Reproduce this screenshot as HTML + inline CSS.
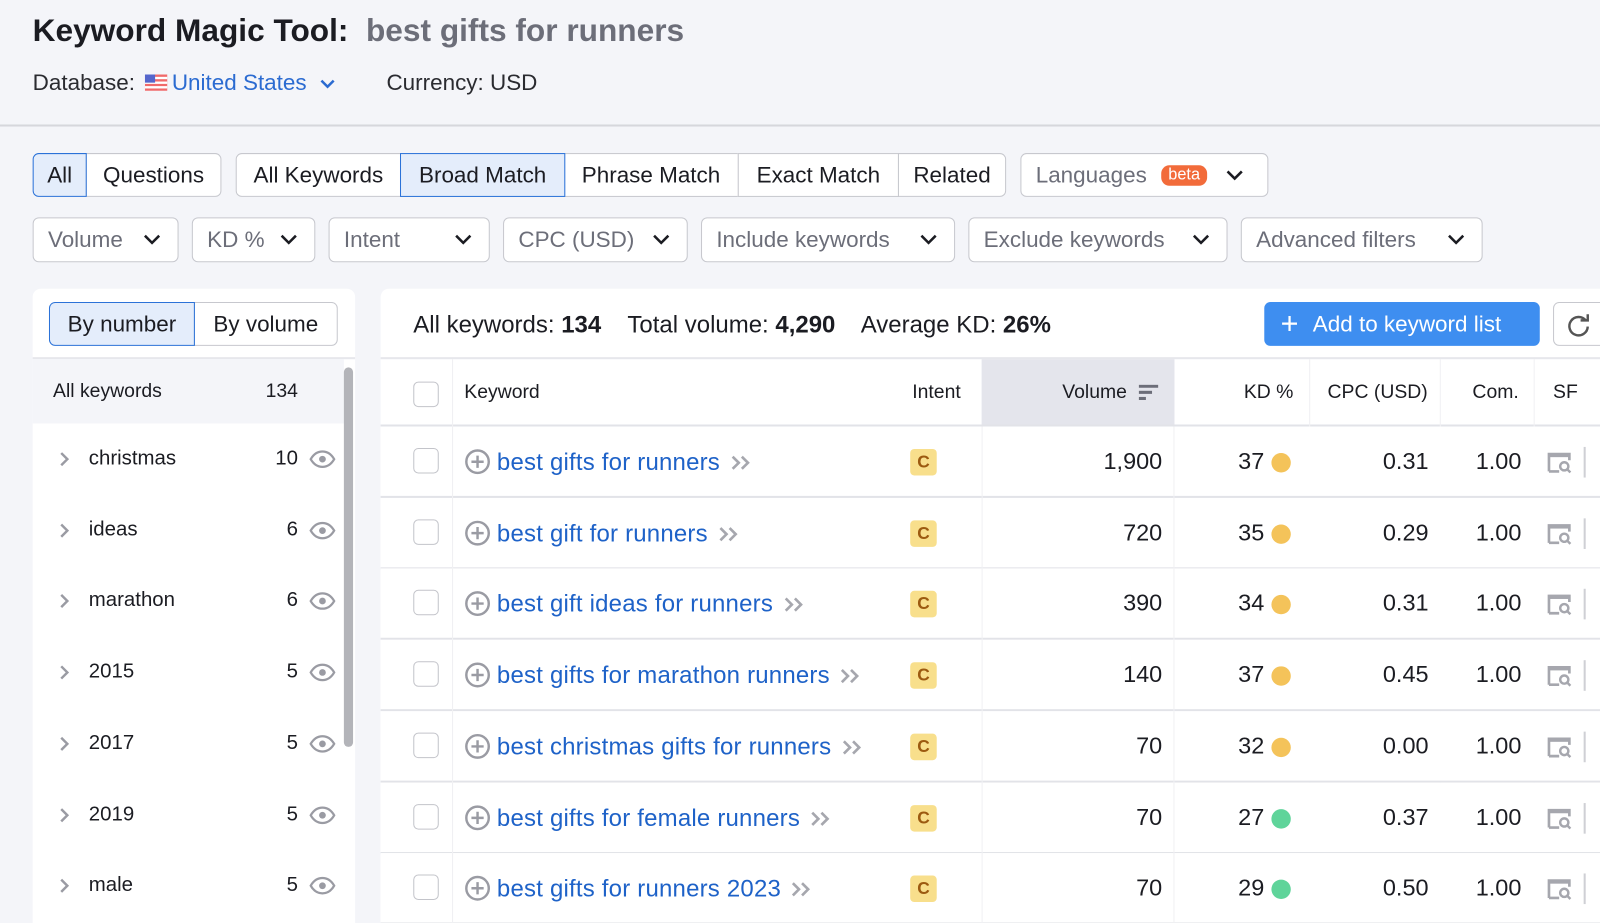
<!DOCTYPE html>
<html style="width:1600px;height:923px;overflow:hidden"><head><meta charset="utf-8">
<style>
*{box-sizing:border-box;margin:0;padding:0}
body{width:1600px;height:923px;overflow:hidden;background:#f4f5f9;font-family:"Liberation Sans",Arial,sans-serif;color:#1b1c22;position:relative}
#w{position:absolute;left:0;top:0;width:1568px;height:905px;overflow:hidden;transform:scale(1.0204);transform-origin:0 0}
.a{position:absolute}
.btn{position:absolute;height:43px;border:1px solid #c7c8ce;background:#fff;font-size:22px;display:flex;align-items:center;justify-content:center;color:#1b1c22}
.sel{background:#e4edfb;border:1.5px solid #2b72d8;z-index:2}
.flt{position:absolute;top:213px;height:44px;border:1px solid #c7c8ce;border-radius:6px;background:#fff;font-size:22px;color:#6c6e79;display:flex;align-items:center;padding-left:14px}
.flt svg{position:absolute;right:16px;top:15px}
.row{position:absolute;left:373px;width:1240px;height:70px;background:#fff;border-bottom:2px solid #e2e3e8}
.cell{position:absolute;font-size:22px;top:50%;transform:translateY(-50%);white-space:nowrap}
</style></head><body><div id="w">
<div class="a" style="left:32px;top:12px;font-size:31px;font-weight:bold;white-space:nowrap">Keyword Magic Tool:&nbsp; <span style="color:#6c6e79">best gifts for runners</span></div>
<div class="a" style="left:32px;top:68px;font-size:22px;white-space:nowrap;color:#2a2b30">Database:
<svg width="22" height="16" style="vertical-align:-1px;margin:0 4px"><rect width="22" height="16" fill="#f06a6a"/><rect y="2.3" width="22" height="2.3" fill="#fff"/><rect y="6.9" width="22" height="2.3" fill="#fff"/><rect y="11.4" width="22" height="2.3" fill="#fff"/><rect width="10" height="8" fill="#5566cc"/></svg><span style="color:#2b6bd1">United States</span>
<svg width="16" height="12" style="margin-left:6px"><path d="M2 3l6 6 6-6" stroke="#2b6bd1" stroke-width="2.5" fill="none"/></svg>
<span style="margin-left:44px">Currency: USD</span></div>
<div class="a" style="left:0;top:122px;width:1600px;height:2px;background:#d6d7dc"></div>

<div class="btn sel" style="left:32px;top:150px;width:53px;border-radius:6px 0 0 6px">All</div>
<div class="btn" style="left:84px;top:150px;width:133px;border-radius:0 6px 6px 0">Questions</div>
<div class="btn" style="left:231px;top:150px;width:162px;border-radius:6px 0 0 6px">All Keywords</div>
<div class="btn sel" style="left:392px;top:150px;width:162px">Broad Match</div>
<div class="btn" style="left:553px;top:150px;width:171px;border-left:none">Phrase Match</div>
<div class="btn" style="left:723px;top:150px;width:158px">Exact Match</div>
<div class="btn" style="left:880px;top:150px;width:106px;border-radius:0 6px 6px 0">Related</div>
<div class="btn" style="left:1000px;top:150px;width:243px;border-radius:6px;justify-content:flex-start;padding-left:14px;color:#6c6e79">Languages<span style="background:#f26b3a;color:#fff;font-size:16px;border-radius:8px;padding:1px 7px;margin-left:14px">beta</span><svg width="18" height="12" style="margin-left:18px"><path d="M2 2l7 7 7-7" stroke="#1b1c22" stroke-width="2.5" fill="none"/></svg></div>

<div class="flt" style="left:32px;width:143px">Volume<svg width="18" height="12"><path d="M2 2l7 7 7-7" stroke="#1b1c22" stroke-width="2.5" fill="none"/></svg></div>
<div class="flt" style="left:188px;width:121px">KD %<svg width="18" height="12"><path d="M2 2l7 7 7-7" stroke="#1b1c22" stroke-width="2.5" fill="none"/></svg></div>
<div class="flt" style="left:322px;width:158px">Intent<svg width="18" height="12"><path d="M2 2l7 7 7-7" stroke="#1b1c22" stroke-width="2.5" fill="none"/></svg></div>
<div class="flt" style="left:493px;width:181px">CPC (USD)<svg width="18" height="12"><path d="M2 2l7 7 7-7" stroke="#1b1c22" stroke-width="2.5" fill="none"/></svg></div>
<div class="flt" style="left:687px;width:249px">Include keywords<svg width="18" height="12"><path d="M2 2l7 7 7-7" stroke="#1b1c22" stroke-width="2.5" fill="none"/></svg></div>
<div class="flt" style="left:949px;width:254px">Exclude keywords<svg width="18" height="12"><path d="M2 2l7 7 7-7" stroke="#1b1c22" stroke-width="2.5" fill="none"/></svg></div>
<div class="flt" style="left:1216px;width:237px">Advanced filters<svg width="18" height="12"><path d="M2 2l7 7 7-7" stroke="#1b1c22" stroke-width="2.5" fill="none"/></svg></div>

<div class="a" style="left:32px;top:283px;width:316px;height:622px;background:#fff;border-radius:8px 8px 0 0"></div>
<div class="btn sel" style="left:48px;top:296px;width:143px;border-radius:6px 0 0 6px">By number</div>
<div class="btn" style="left:190px;top:296px;width:141px;border-radius:0 6px 6px 0">By volume</div>
<div class="a" style="left:32px;top:350px;width:316px;height:2px;background:#e6e7ec"></div>
<div class="a" style="left:32px;top:352px;width:305px;height:63px;background:#f4f5f9"></div>
<div class="a" style="left:52px;top:373px;font-size:19px">All keywords</div>
<div class="a" style="left:250px;top:373px;width:42px;text-align:right;font-size:19px">134</div>
<div class="a" style="left:337px;top:360px;width:9px;height:372px;border-radius:5px;background:#b3b4b9"></div>

<div class="a" style="left:373px;top:283px;width:1240px;height:622px;background:#fff;border-radius:8px 0 0 0"></div>
<div class="a" style="left:405px;top:305px;font-size:23.5px;white-space:nowrap">All keywords: <b>134</b>&nbsp;&nbsp;&nbsp; Total volume: <b>4,290</b>&nbsp;&nbsp;&nbsp; Average KD: <b>26%</b></div>
<div class="a" style="left:1239px;top:296px;width:270px;height:43px;background:#3e8ef0;border-radius:6px;color:#fff;font-size:22px;display:flex;align-items:center;padding-left:16px"><span style="font-size:30px;font-weight:300;margin-right:14px;line-height:1">+</span>Add to keyword list</div>
<div class="a" style="left:1522px;top:296px;width:60px;height:43px;border:1px solid #c7c8ce;border-radius:6px;background:#fff"><svg class="a" style="left:12px;top:10px" width="24" height="24"><path d="M19 7A9 9 0 1 0 21 13" stroke="#555" stroke-width="2.4" fill="none"/><path d="M14 6h7V0" stroke="#555" stroke-width="2.4" fill="none" transform="translate(0,1)"/></svg></div>
<div class="a" style="left:373px;top:350px;width:1240px;height:2px;background:#e6e7ec"></div>
<div class="a" style="left:962px;top:352px;width:189px;height:66px;background:#e4e5ec"></div>
<div class="a" style="left:373px;top:416px;width:1240px;height:2px;background:#e2e3e8"></div>
<div class="a" style="left:405px;top:374px;width:25px;height:25px;border:1.5px solid #c3c4ca;border-radius:5px;background:#fff"></div>
<div class="a" style="left:455px;top:374px;font-size:19px">Keyword</div>
<div class="a" style="left:894px;top:374px;font-size:19px">Intent</div>
<div class="a" style="left:1041px;top:374px;font-size:19px">Volume</div>
<svg class="a" style="left:1116px;top:377px" width="20" height="16"><rect width="19" height="3" fill="#6c6e79"/><rect y="6" width="13" height="3" fill="#6c6e79"/><rect y="12" width="7" height="3" fill="#6c6e79"/></svg>
<div class="a" style="left:1219px;top:374px;font-size:19px">KD %</div>
<div class="a" style="left:1301px;top:374px;font-size:19px">CPC (USD)</div>
<div class="a" style="left:1443px;top:374px;font-size:19px">Com.</div>
<div class="a" style="left:1522px;top:374px;font-size:19px">SF</div>
<div class="a" style="left:443px;top:352px;width:1px;height:553px;background:#f0f0f3"></div>
<div class="a" style="left:1283px;top:352px;width:1px;height:553px;background:#f0f0f3"></div>
<div class="a" style="left:1411px;top:352px;width:1px;height:553px;background:#f0f0f3"></div>
<div class="a" style="left:1503px;top:352px;width:1px;height:553px;background:#f0f0f3"></div>

<div id="rows"></div>
</div>
<script>
var L=[["christmas",10],["ideas",6],["marathon",6],["2015",5],["2017",5],["2019",5],["male",5]];
var R=[["best gifts for runners","1,900",37,"y","0.31"],["best gift for runners","720",35,"y","0.29"],["best gift ideas for runners","390",34,"y","0.31"],["best gifts for marathon runners","140",37,"y","0.45"],["best christmas gifts for runners","70",32,"y","0.00"],["best gifts for female runners","70",27,"g","0.37"],["best gifts for runners 2023","70",29,"g","0.50"]];
var h="";
for(var i=0;i<7;i++){var c=Math.round(450+i*69.7);
h+='<svg class="a" style="left:57px;top:'+(c-8)+'px" width="12" height="16"><path d="M3 2l6 6-6 6" stroke="#9a9ba3" stroke-width="2.4" fill="none"/></svg>';
h+='<div class="a" style="left:87px;top:'+(c-12)+'px;font-size:20px">'+L[i][0]+'</div>';
h+='<div class="a" style="left:250px;top:'+(c-12)+'px;width:42px;text-align:right;font-size:20px">'+L[i][1]+'</div>';
h+='<svg class="a" style="left:303px;top:'+(c-9)+'px" width="26" height="18"><path d="M1.5 9C5 3 9 1.5 13 1.5S21 3 24.5 9C21 15 17 16.5 13 16.5S5 15 1.5 9z" stroke="#9a9ba3" stroke-width="2.2" fill="none"/><circle cx="13" cy="9" r="3.3" fill="#9a9ba3"/></svg>';}
for(var i=0;i<7;i++){var t=Math.round(418+i*69.7),r=R[i];
h+='<div class="row" style="top:'+t+'px">';
h+='<div class="a" style="left:70px;top:0;width:1px;height:70px;background:#f0f0f3"></div><div class="a" style="left:589px;top:0;width:1px;height:70px;background:#f0f0f3"></div><div class="a" style="left:777px;top:0;width:1px;height:70px;background:#f0f0f3"></div>';
h+='<div class="a" style="left:32px;top:21px;width:25px;height:25px;border:1.5px solid #c3c4ca;border-radius:5px"></div>';
h+='<div class="cell" style="left:82px;color:#1e62c8;margin-top:1px;font-size:23.5px;letter-spacing:0.2px"><svg width="26" height="26" style="vertical-align:-5px;margin-right:6px"><circle cx="13" cy="13" r="11" stroke="#9a9ba3" stroke-width="2.4" fill="none"/><path d="M13 7v12M7 13h12" stroke="#9a9ba3" stroke-width="2.4"/></svg>'+r[0]+'<svg width="22" height="16" style="margin-left:10px;vertical-align:-1px"><path d="M2 2l6 6-6 6M11 2l6 6-6 6" stroke="#a6a7ae" stroke-width="2.6" fill="none"/></svg></div>';
h+='<div class="a" style="left:519px;top:22px;width:26px;height:26px;background:#f8df8c;border-radius:4px;color:#9c5a10;font-weight:bold;font-size:17px;text-align:center;line-height:26px">C</div>';
h+='<div class="cell" style="right:474px;text-align:right;font-size:23px">'+r[1]+'</div>';
h+='<div class="cell" style="right:374px;font-size:23px">'+r[2]+'</div>';
h+='<div class="a" style="left:873px;top:26px;width:19px;height:19px;border-radius:50%;background:'+(r[3]=="y"?"#f4c35a":"#5fd49a")+'"></div>';
h+='<div class="cell" style="right:213px;font-size:23px">'+r[4]+'</div>';
h+='<div class="cell" style="right:122px;font-size:23px">1.00</div>';
h+='<svg class="a" style="left:1143px;top:24px" width="26" height="22"><path d="M2 20V3h20v6" stroke="#a6a7ae" stroke-width="2.6" fill="none"/><path d="M2 20h10" stroke="#a6a7ae" stroke-width="2.6"/><rect x="2" y="2" width="20" height="4" fill="#a6a7ae"/><circle cx="17" cy="15" r="4" stroke="#a6a7ae" stroke-width="2.4" fill="none"/><path d="M20 18l3 3" stroke="#a6a7ae" stroke-width="2.4"/></svg>';
h+='<div class="a" style="left:1179px;top:20px;width:2px;height:30px;background:#cfd0d5"></div>';
h+='</div>';}
document.getElementById("rows").innerHTML=h;
</script>
</body></html>
